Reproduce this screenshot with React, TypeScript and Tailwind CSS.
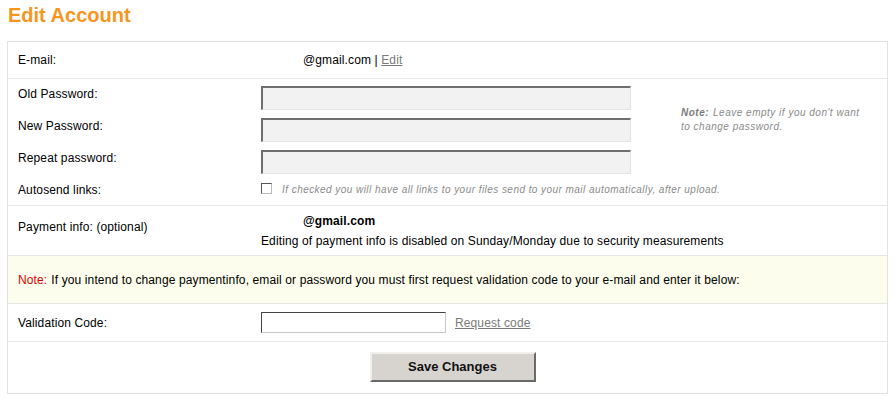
export default function App() {
  const label = "text-[12px] leading-[14px] tracking-[0.12px] text-black";
  const pwInput =
    "block h-[24px] w-[370px] bg-[#f2f2f2] border-t-2 border-l-2 border-b border-r border-t-[#6e6e6e] border-l-[#6e6e6e] border-b-[#e4e4e4] border-r-[#e4e4e4] outline-none";

  return (
    <div className="min-h-[402px] bg-white px-[7px] pt-[3px] font-['Liberation_Sans',Arial,sans-serif]">
      <h1 className="pl-[1px] text-[20px] font-bold leading-[25px] text-[#f7951d]">Edit Account</h1>

      <div className="mt-[13px] w-[881px] border border-[#e2e2e2]">
        {/* E-mail */}
        <div className="flex h-[37px] items-center border-b border-[#e6e6e6]">
          <div className={`w-[253px] pl-[10px] ${label}`}>E-mail:</div>
          <div className={`pl-[42px] ${label}`}>
            @gmail.com |{" "}
            <a href="#" className="text-[#7a7a7a] underline">
              Edit
            </a>
          </div>
        </div>

        {/* Passwords */}
        <div className="flex flex-col border-b border-[#e6e6e6] pt-[7px] pb-[9px]">
          <div className="flex">
            <div className="flex flex-col">
              <div className="flex h-[32px]">
                <div className={`w-[253px] pl-[10px] pt-[1px] ${label}`}>Old Password:</div>
                <input type="password" className={pwInput} />
              </div>
              <div className="flex h-[32px]">
                <div className={`w-[253px] pl-[10px] pt-[1px] ${label}`}>New Password:</div>
                <input type="password" className={pwInput} />
              </div>
              <div className="flex h-[32px]">
                <div className={`w-[253px] pl-[10px] pt-[1px] ${label}`}>Repeat password:</div>
                <input type="password" className={pwInput} />
              </div>
            </div>
            <div className="ml-[50px] flex flex-col pt-[20px] text-[10px] italic leading-[14px] tracking-[0.5px] text-[#8a8a8a]">
              <div className="flex">
                <b className="mr-[4px] text-[#7c7c7c]">Note:</b>
                <span>Leave empty if you don't want</span>
              </div>
              <span>to change password.</span>
            </div>
          </div>
          <div className="flex h-[14px] items-center">
            <div className={`w-[253px] pl-[10px] pt-[1px] ${label}`}>Autosend links:</div>
            <span className="mb-[1px] block h-[11px] w-[11px] border-t border-l border-b border-r border-t-[#555] border-l-[#555] border-b-[#bbb] border-r-[#bbb] bg-white" />
            <span className="ml-[10px] text-[10px] italic tracking-[0.45px] text-[#8a8a8a]">
              If checked you will have all links to your files send to your mail automatically, after upload.
            </span>
          </div>
        </div>

        {/* Payment info */}
        <div className="flex h-[50px] items-center border-b border-[#e6e6e6]">
          <div className={`w-[253px] pl-[10px] pb-[8px] ${label}`}>Payment info: (optional)</div>
          <div className="flex flex-col text-[12px] leading-[20px] tracking-[0.12px] text-black">
            <span className="pl-[42px] font-bold">@gmail.com</span>
            <span>Editing of payment info is disabled on Sunday/Monday due to security measurements</span>
          </div>
        </div>

        {/* Note */}
        <div className="flex h-[48px] items-center border-b border-[#e6e6e6] bg-[#fcfdec] pl-[10px] text-[12px] tracking-[0.12px] text-black">
          <span className="mr-[4px] text-[#e00000]">Note:</span>
          <span>If you intend to change paymentinfo, email or password you must first request validation code to your e-mail and enter it below:</span>
        </div>

        {/* Validation */}
        <div className="flex h-[38px] items-center border-b border-[#e6e6e6]">
          <div className={`w-[253px] pl-[10px] ${label}`}>Validation Code:</div>
          <input
            type="text"
            className="h-[21px] w-[185px] border-t border-l border-b border-r border-t-[#444] border-l-[#444] border-b-[#c8c8c8] border-r-[#c8c8c8] bg-white outline-none"
          />
          <a href="#" className="ml-[9px] text-[12px] tracking-[0.12px] text-[#7a7a7a] underline">
            Request code
          </a>
        </div>

        {/* Save */}
        <div className="flex justify-center pt-[10px] pb-[11px] pl-[10px]">
          <button className="h-[30px] w-[166px] border-t-2 border-l-2 border-b-2 border-r-2 border-t-[#f0efec] border-l-[#f0efec] border-b-[#6a6a6a] border-r-[#6a6a6a] bg-[#d7d4cf] text-[13px] font-bold text-[#111]">
            Save Changes
          </button>
        </div>
      </div>
    </div>
  );
}
